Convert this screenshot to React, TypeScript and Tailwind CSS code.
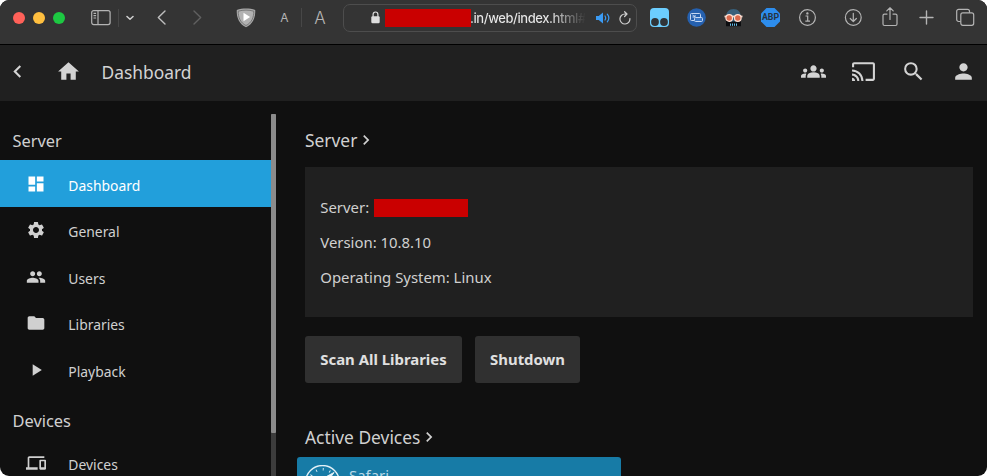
import type { ReactNode } from "react";
import {
  MdCast,
  MdChevronLeft,
  MdChevronRight,
  MdDashboard,
  MdDevices,
  MdFolder,
  MdGroups,
  MdHome,
  MdPeople,
  MdPerson,
  MdPlayArrow,
  MdSearch,
  MdSettings,
} from "react-icons/md";

function BrowserBar() {
  return (
    <div className="flex h-[45px] shrink-0 items-center border-b border-black bg-[#343434] pb-[9px] font-['Inter','Liberation_Sans',sans-serif] text-[#b4b4b4]">
      <div className="ml-[13px] flex gap-2">
        <span className="size-3 rounded-full bg-[#ff6159]" />
        <span className="size-3 rounded-full bg-[#ffbf3f]" />
        <span className="size-3 rounded-full bg-[#1dc842]" />
      </div>
      <svg className="ml-[26px] h-4 w-5 shrink-0" viewBox="0 0 20 16" fill="none" stroke="currentColor" strokeWidth="1.2">
        <rect x="0.7" y="0.6" width="18.4" height="14" rx="2" />
        <path d="M7 .6v14M2.500 3.400h2.600M2.500 5.700h2.600M2.500 8h2.600" />
      </svg>
      <span className="ml-[7px] h-[18px] w-px bg-[#474747]" />
      <svg className="ml-[7px] h-[6px] w-2 shrink-0" viewBox="0 0 8 6" fill="none" stroke="#d0d0d0" strokeWidth="1.5" strokeLinecap="round" strokeLinejoin="round">
        <path d="M1 1.5l3 2.8L7 1.5" />
      </svg>
      <svg className="ml-[23px] h-[15px] w-[9px] shrink-0" viewBox="0 0 9 15" fill="none" stroke="#bdbdbd" strokeWidth="1.4" strokeLinecap="round" strokeLinejoin="round">
        <path d="M8 1L1.3 7.5 8 14" />
      </svg>
      <svg className="ml-[27px] h-[15px] w-[9px] shrink-0" viewBox="0 0 9 15" fill="none" stroke="#606060" strokeWidth="1.4" strokeLinecap="round" strokeLinejoin="round">
        <path d="M1 1l6.7 6.5L1 14" />
      </svg>
      <svg className="ml-[33.500px] h-5 w-5 shrink-0" viewBox="0 0 20 20">
        <path d="M10 .6C13 .6 16.500 1.100 19.200 2 19.800 9.500 16.500 16.500 10 19.200 3.500 16.500.2 9.500.8 2 3.500 1.100 7 .6 10 .6z" fill="#a8a8a8" />
        <path d="M10 2.100c2.600 0 5.300.4 7.700 1.100.3 6.200-2.300 11.800-7.700 14.300C4.600 15 2 9.400 2.300 3.200 4.700 2.500 7.400 2.100 10 2.100z" fill="#b2b2b2" stroke="#6c6c6c" strokeWidth=".8" />
        <path d="M7.500 4.800v8.400l6.600-4.200z" fill="#fff" />
      </svg>
      <span className="ml-[24.500px] w-[9px] text-center text-[12px] leading-[18px]">A</span>
      <span className="ml-[12px] h-[19px] w-px bg-[#474747]" />
      <span className="ml-3 w-3 text-center text-[17px] leading-[18px] font-light">A</span>
      <div className="ml-[17px] flex h-[28px] w-[294px] shrink-0 items-center rounded-[7px] border border-[#4d4d4d] pl-[27px]">
        <svg className="h-[13px] w-[9px] shrink-0" viewBox="0 0 9 13">
          <rect x=".3" y="5.300" width="8.400" height="7" rx="1.200" fill="#dedede" />
          <path d="M2.100 6V3.400a2.400 2.400 0 0 1 4.800 0V6" fill="none" stroke="#dedede" strokeWidth="1.200" />
        </svg>
        <span className="ml-[5px] h-[18px] w-[86px] shrink-0 bg-[#ca0000]" />
        <span className="-ml-px w-[115px] bg-linear-to-r from-[#e8e8e8] from-70% to-[#383838] bg-clip-text text-[13px] leading-[18px] font-medium tracking-[-0.033em] whitespace-nowrap text-transparent">
          .in/web/index.html#
        </span>
        <svg className="ml-[11px] h-3 w-[14px] shrink-0" viewBox="0 0 14 12">
          <path d="M0 4h2.700L7 .6v10.800L2.700 8H0z" fill="#3b9bf4" />
          <path d="M9 4c.8 1.200.8 2.800 0 4M11.300 2.200c1.800 2.200 1.800 5.400 0 7.600" fill="none" stroke="#3b9bf4" strokeWidth="1.200" strokeLinecap="round" />
        </svg>
        <svg className="ml-[9px] h-[14px] w-3 shrink-0" viewBox="0 0 12 14" fill="none" stroke="#cfcfcf" strokeWidth="1.200" strokeLinecap="round" strokeLinejoin="round">
          <path d="M10.900 7.600A5 5 0 1 1 6 3h1.800M5.600.7L8 3 5.600 5.500" />
        </svg>
      </div>

      <svg className="ml-[13px] size-[19px] shrink-0" viewBox="0 0 19 19">
        <rect width="19" height="19" rx="4" fill="#6cceff" />
        <circle cx="5" cy="14" r="3.900" fill="#303438" />
        <circle cx="14" cy="14" r="3.900" fill="#303438" />
      </svg>
      <svg className="ml-[18px] size-[19px] shrink-0" viewBox="0 0 19 19">
        <circle cx="9.500" cy="9.500" r="9.300" fill="#2560ae" />
        <g fill="none" stroke="#c5d7f2">
          <path d="M7 12.500H4.500a1 1 0 0 1-1-1v-5a1 1 0 0 1 1-1h8a1 1 0 0 1 1 1V9" />
          <rect x="7.500" y="9.500" width="8" height="4" rx="1" fill="#3a76c4" />
          <path d="M5.500 7l2.500 2M8 7v2H5.500" />
        </g>
      </svg>
      <svg className="ml-[18px] size-[19px] shrink-0" viewBox="0 0 19 19">
        <path d="M2.200 9C2 4 5 1 9.500 1S17 4 16.800 9v9H2.200z" fill="#38607b" />
        <path d="M2 12l4 1.500h7l4-1.500v6.300H2z" fill="#0c0d10" />
        <path d="M.5 8.500h18" stroke="#f3d6cb" strokeWidth="1.800" />
        <circle cx="5.200" cy="10" r="3.300" fill="#d9694c" stroke="#ffe0d3" strokeWidth="1.200" />
        <circle cx="13.800" cy="10" r="3.300" fill="#d9694c" stroke="#ffe0d3" strokeWidth="1.200" />
        <path d="M6.500 15.500v2.300M8.500 15.500v2.300M10.500 15.500v2.300M12.500 15.500v2.300" stroke="#65bde8" strokeWidth="1" />
      </svg>
      <span className="ml-[18px] flex size-[19px] shrink-0 items-center justify-center bg-[#2d8ded] font-['Roboto',sans-serif] text-[8.8px] leading-none font-bold text-[#263340] [clip-path:polygon(29%_0,71%_0,100%_29%,100%_71%,71%_100%,29%_100%,0_71%,0_29%)]">
        ABP
      </span>
      <svg className="ml-[18px] size-[19px] shrink-0" viewBox="0 0 19 19" fill="none" stroke="currentColor" strokeWidth="1.200">
        <circle cx="9.500" cy="9.500" r="7.900" />
        <path d="M7.500 8h2.200v5M7.300 13.200h4.700" />
        <circle cx="9.400" cy="5.400" r=".6" fill="currentColor" />
      </svg>
      <svg className="ml-[27px] size-[19px] shrink-0" viewBox="0 0 19 19" fill="none" stroke="currentColor" strokeWidth="1.200" strokeLinecap="round" strokeLinejoin="round">
        <circle cx="9.300" cy="9.500" r="7.900" />
        <path d="M9.300 5.300v8M6.200 10.500l3.100 3 3.100-3" />
      </svg>
      <svg className="ml-[19px] h-[21px] w-4 shrink-0" viewBox="0 0 16 21" fill="none" stroke="currentColor" strokeWidth="1.200" strokeLinecap="round" strokeLinejoin="round">
        <path d="M5 7.100H2.500A1.500 1.500 0 0 0 1 8.600v8.400A1.500 1.500 0 0 0 2.500 18.500h11a1.500 1.500 0 0 0 1.500-1.500V8.600a1.500 1.500 0 0 0-1.500-1.500H11M8 12.500V.9M4.800 3.900L8 .8l3.200 3.100" />
      </svg>
      <svg className="ml-[21px] size-[15px] shrink-0" viewBox="0 0 15 15" fill="none" stroke="currentColor" strokeWidth="1.400" strokeLinecap="round">
        <path d="M7.500 1v13M1 7.500h13" />
      </svg>
      <svg className="ml-[21.500px] h-[19px] w-[19px] shrink-0" viewBox="0 0 19 19" fill="none" stroke="currentColor" strokeWidth="1.200">
        <path d="M4.600 13.500H2.700a2 2 0 0 1-2-2V3.300a2 2 0 0 1 2-2h8.800a2 2 0 0 1 2 2v1.400" />
        <rect x="4.800" y="4.900" width="12.900" height="12.400" rx="2" />
      </svg>
    </div>
  );
}

function AppHeader() {
  return (
    <header className="flex h-14 shrink-0 items-center bg-[#202020] pb-[3px] text-[#d3d3d3]">
      <MdChevronLeft className="ml-[5px] size-[25px]" />
      <MdHome className="ml-[25.500px] size-[25px]" />
      <h1 className="mt-px ml-[21px] text-[17.400px] leading-6">Dashboard</h1>
      <div className="mr-[11.500px] ml-auto flex gap-[25px]">
        <MdGroups className="size-[25px]" />
        <MdCast className="size-[25px]" />
        <MdSearch className="size-[25px]" />
        <MdPerson className="size-[25px]" />
      </div>
    </header>
  );
}

function NavItem({ icon, label, active = false }: { icon: ReactNode; label: string; active?: boolean }) {
  return (
    <a className={`flex h-[46.5px] shrink-0 items-center pl-[26px] ${active ? "bg-[#229fdb] text-white" : "text-[#d0d0d0]"}`}>
      <span className="mt-px text-[20px]">{icon}</span>
      <span className="mt-[5px] ml-[22.300px] text-[13.900px] leading-5">{label}</span>
    </a>
  );
}

function Sidebar() {
  return (
    <div className="flex w-[276px] shrink-0 pt-[13px]">
      <nav className="flex w-[271px] flex-col overflow-hidden">
        <h2 className="h-[46px] shrink-0 pt-[15px] pl-[12.500px] text-[16.400px] leading-6 text-[#d0d0d0]">Server</h2>
        <NavItem icon={<MdDashboard />} label="Dashboard" active />
        <NavItem icon={<MdSettings />} label="General" />
        <NavItem icon={<MdPeople />} label="Users" />
        <NavItem icon={<MdFolder />} label="Libraries" />
        <NavItem icon={<MdPlayArrow />} label="Playback" />
        <h2 className="h-[47px] shrink-0 pt-[16px] pl-[12.500px] text-[16.400px] leading-6 text-[#d0d0d0]">Devices</h2>
        <NavItem icon={<MdDevices />} label="Devices" />
      </nav>
      <div className="w-[5px] bg-[#3c3c3c]">
        <div className="h-[319px] rounded-[1px] bg-[#8b8b8b]" />
      </div>
    </div>
  );
}

function SectionTitle({ children }: { children: string }) {
  return (
    <h2 className="flex h-6 items-center pb-[2px] text-[17.400px] leading-6 text-[#d0d0d0]">
      {children}
      <MdChevronRight className="-ml-px size-5" />
    </h2>
  );
}

function Content() {
  return (
    <main className="min-w-0 flex-1 overflow-hidden pt-[28px] pr-[14px] pl-[29px]">
      <SectionTitle>Server</SectionTitle>
      <section className="mt-[14px] flex h-[150px] flex-col gap-[11px] bg-[#202020] pt-[28px] pl-[15.300px] text-[14.900px] leading-6 text-[#d0d0d0]">
        <p className="flex items-center">
          Server:
          <span className="mt-px ml-[5px] h-[18px] w-[94px] bg-[#ca0000]" />
        </p>
        <p>Version: 10.8.10</p>
        <p>Operating System: Linux</p>
      </section>
      <div className="mt-[19px] flex gap-[13px] text-[14.900px] font-bold text-[#e0e0e0]">
        <button className="h-[47px] w-[157px] rounded-[3px] bg-[#303030]">Scan All Libraries</button>
        <button className="h-[47px] w-[105px] rounded-[3px] bg-[#303030]">Shutdown</button>
      </div>
      <div className="mt-[43px]">
        <SectionTitle>Active Devices</SectionTitle>
      </div>
      <div className="mt-[7px] -ml-2 flex h-[120px] w-[324px] rounded-t-[3px] bg-[#177ba6] pt-2 pl-2 text-[#b9d9e7]">
        <svg className="size-[36px]" viewBox="0 0 36 36" fill="none" stroke="#e4f1f7">
          <circle cx="17.500" cy="17.500" r="17" strokeWidth="1.300" />
          <circle cx="17.500" cy="17.500" r="13.200" strokeWidth="2.500" strokeDasharray=".9 6" />
          <path d="M29 7.500L15 15l-7.500 13L20 20z" fill="#e4f1f7" />
        </svg>
        <span className="ml-2 text-[14.900px] leading-5">Safari</span>
      </div>
    </main>
  );
}

export default function App() {
  return (
    <div className="h-[476px] w-[987px] bg-white">
      <div className="flex h-full flex-col overflow-hidden rounded-[9px] bg-[#101010] font-['Noto_Sans',sans-serif]">
        <BrowserBar />
        <AppHeader />
        <div className="flex min-h-0 flex-1">
          <Sidebar />
          <Content />
        </div>
      </div>
    </div>
  );
}
